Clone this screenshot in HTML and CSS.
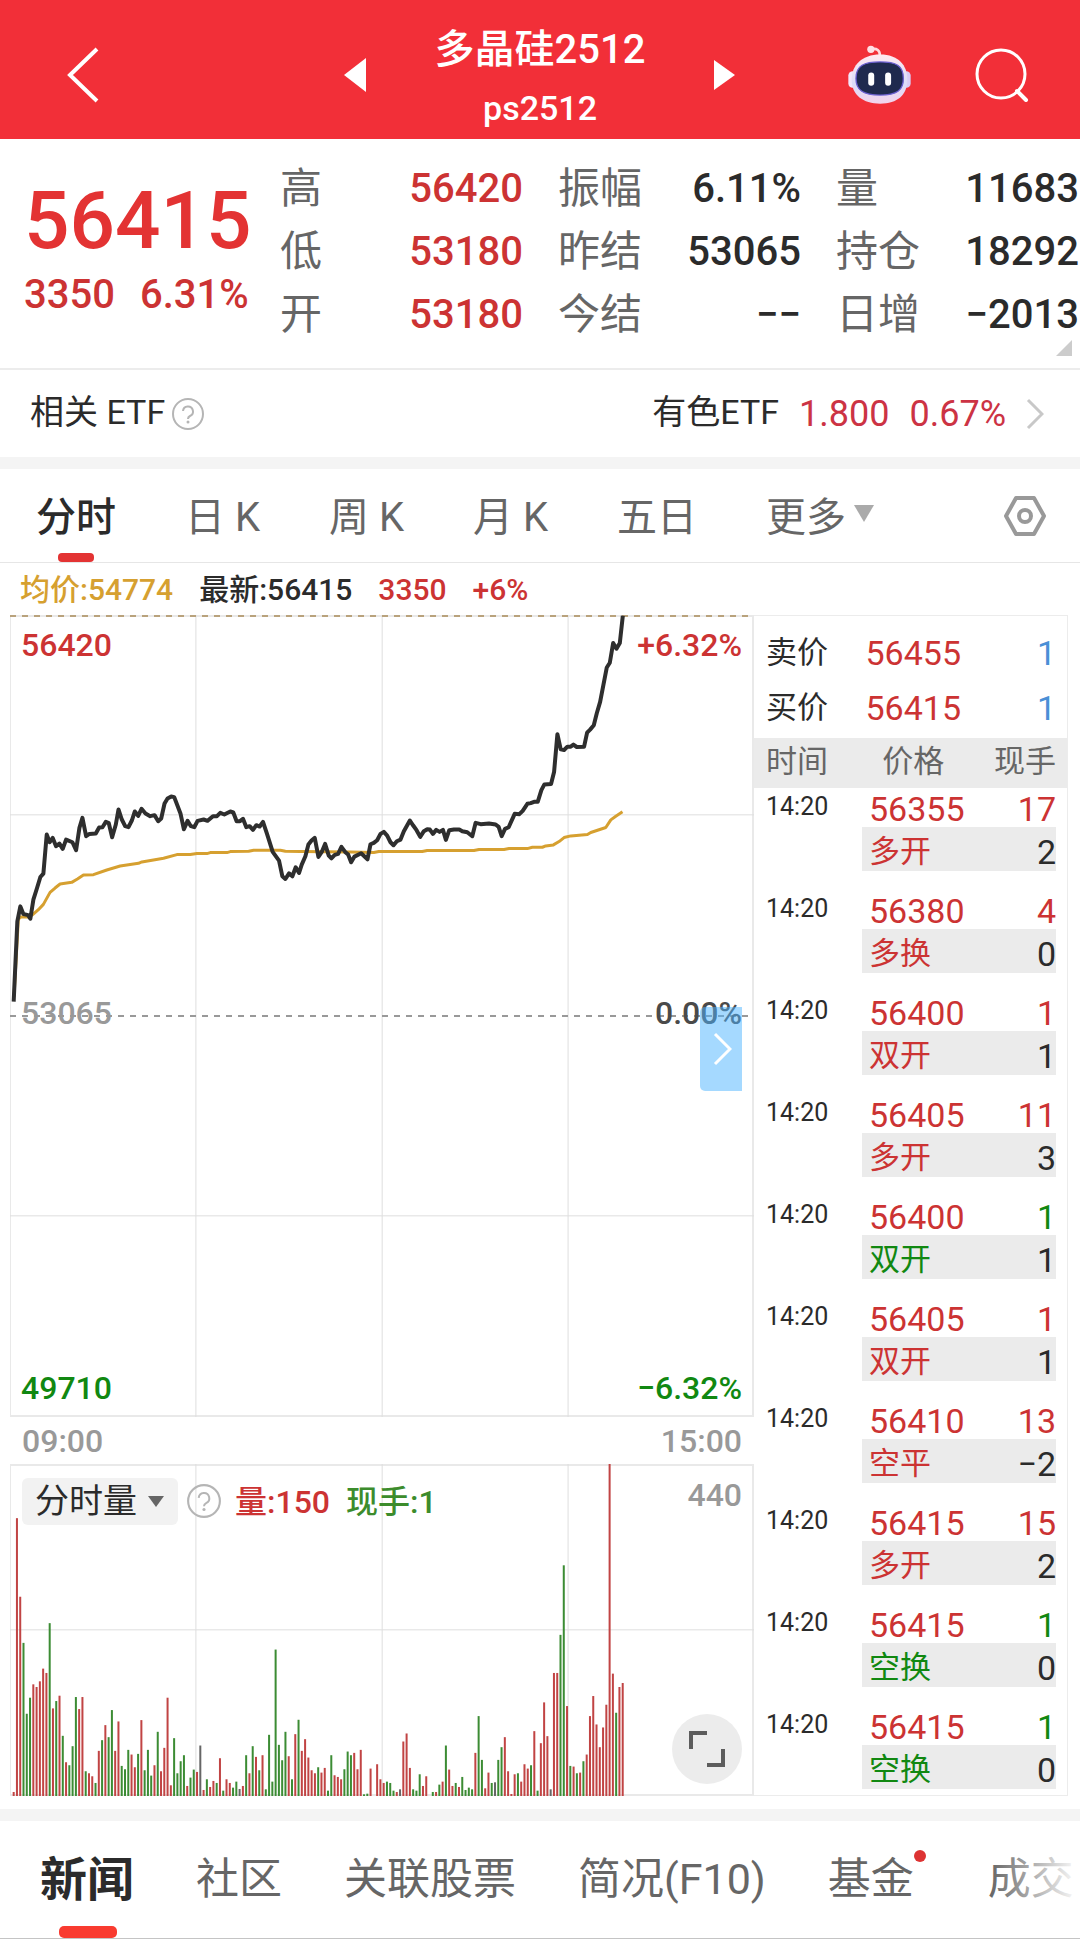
FILE: index.html
```html
<!DOCTYPE html>
<html lang="zh-CN">
<head>
    <meta charset="UTF-8">
    <meta name="viewport" content="width=device-width, initial-scale=1.0">
    <title>多晶硅2512</title>
    <link rel="stylesheet" href="styles.css">
</head>
<body>
<header class="topbar">
    <button class="back" aria-label="返回">
        <svg width="34" height="56" viewBox="0 0 34 56"><path d="M31 2 L4 28 L31 54" fill="none" stroke="#fff" stroke-width="4"/></svg>
    </button>
    <div class="switcher">
        <button aria-label="上一个"><svg width="24" height="34" viewBox="0 0 24 34"><path d="M22 0 V34 L0 17 Z" fill="#fff"/></svg></button>
        <h1>多晶硅2512<small>ps2512</small></h1>
        <button aria-label="下一个"><svg width="24" height="34" viewBox="0 0 24 34"><path d="M2 2 V32 L23 17 Z" fill="#fff"/></svg></button>
    </div>
    <div class="tools">
        <button aria-label="智能助手">
            <svg width="65" height="61" viewBox="80 68 196 184">
                <defs>
                    <linearGradient id="shell" x1="0" y1="0" x2="0" y2="1">
                        <stop offset="0" stop-color="#ffe9f0"/>
                        <stop offset="0.6" stop-color="#dcdcf8"/>
                        <stop offset="1" stop-color="#f3d3ec"/>
                    </linearGradient>
                </defs>
                <path d="M152 84 Q180 78 179 104" fill="none" stroke="#ffd9de" stroke-width="8"/>
                <circle cx="152" cy="84" r="11" fill="#ffdfe4"/>
                <rect x="84" y="150" width="26" height="50" rx="13" fill="#f3e6fa"/>
                <rect x="246" y="150" width="26" height="50" rx="13" fill="#d9cdf6"/>
                <path d="M180 100 C235 100 262 132 262 176 C262 222 232 248 180 248 C128 248 94 222 94 176 C94 132 125 100 180 100 Z" fill="url(#shell)"/>
                <path d="M180 122 C228 122 250 132 250 172 C250 208 230 222 180 222 C130 222 107 208 107 172 C107 132 132 122 180 122 Z" fill="#1f2a4e" stroke="#6a5fd0" stroke-width="4"/>
                <rect x="144" y="154" width="18" height="40" rx="9" fill="#fff"/>
                <rect x="195" y="154" width="18" height="40" rx="9" fill="#fff"/>
            </svg>
        </button>
        <button aria-label="搜索">
            <svg width="54" height="54" viewBox="0 0 54 54"><circle cx="26" cy="26" r="24" fill="none" stroke="#fff" stroke-width="3"/><path d="M42 43 L51 52" stroke="#fff" stroke-width="4" stroke-linecap="round"/></svg>
        </button>
    </div>
</header>

<section class="quote">
    <div class="last">
        <strong>56415</strong>
        <p><span>3350</span><span>6.31%</span></p>
    </div>
    <dl class="up">
        <dt>高</dt><dd>56420</dd>
        <dt>低</dt><dd>53180</dd>
        <dt>开</dt><dd>53180</dd>
    </dl>
    <dl>
        <dt>振幅</dt><dd>6.11%</dd>
        <dt>昨结</dt><dd>53065</dd>
        <dt>今结</dt><dd>−−</dd>
    </dl>
    <dl>
        <dt>量</dt><dd>11683</dd>
        <dt>持仓</dt><dd>18292</dd>
        <dt>日增</dt><dd>−2013</dd>
    </dl>
    <i class="corner"></i>
</section>

<section class="etf">
    <span>相关 ETF</span>
    <button class="help" aria-label="说明">
        <svg width="34" height="34" viewBox="0 0 34 34"><circle cx="17" cy="17" r="15" fill="none" stroke="#b5b5b5" stroke-width="2"/><path d="M12 14 a5 5 0 1 1 7 5 q-2 1 -2 3" fill="none" stroke="#b5b5b5" stroke-width="2"/><circle cx="17" cy="25" r="1.5" fill="#b5b5b5"/></svg>
    </button>
    <a class="etf-link" href="#etf">
        <span>有色ETF</span><b>1.800</b><b>0.67%</b>
        <svg width="18" height="32" viewBox="0 0 18 32"><path d="M2 2 L16 16 L2 30" fill="none" stroke="#c8c8c8" stroke-width="3"/></svg>
    </a>
</section>

<nav class="periods">
    <button class="active">分时</button>
    <button>日 K</button>
    <button>周 K</button>
    <button>月 K</button>
    <button>五日</button>
    <button>更多<svg width="20" height="17" viewBox="0 0 20 17"><path d="M0 0 H20 L10 17 Z" fill="#aaa"/></svg></button>
    <button class="settings" aria-label="设置">
        <svg width="42" height="42" viewBox="0 0 42 42"><path d="M12 3 H30 L40 21 L30 39 H12 L2 21 Z" fill="none" stroke="#999" stroke-width="4" stroke-linejoin="round"/><circle cx="21" cy="21" r="6" fill="none" stroke="#999" stroke-width="4"/></svg>
    </button>
</nav>

<p class="legend">
    <span class="avg">均价:54774</span>
    <span>最新:56415</span>
    <span class="up">3350</span>
    <span class="up">+6%</span>
</p>

<main class="board">
    <div class="charts">
        <div class="price-chart">
            <svg viewBox="30 48 2229 2400" preserveAspectRatio="none">
                <path class="grid" d="M587 48 V2448 M1145 48 V2448 M1702 48 V2448 M30 646 H2259 M30 1846 H2259"/>
                <path class="limit" d="M30 51 H2259"/>
                <path class="zero" d="M30 1248 H2259"/>
                <polyline class="avg-line" points="42,1190 55,958 62,952 85,952 98,945 115,930 130,914 150,878 165,865 180,853 215,848 232,838 250,826 280,825 320,811 360,799 415,791 425,787 490,776 530,765 570,765 590,762 620,762 630,759 680,759 690,756 745,755 760,752 840,752 855,755 900,756 1050,757 1120,759 1135,756 1265,756 1280,753 1420,753 1435,750 1510,750 1525,747 1580,747 1595,743 1625,743 1635,739 1658,736 1675,726 1690,714 1710,709 1760,705 1770,699 1815,684 1830,661 1845,650 1865,637"/>
                <polyline class="price-line" points="41,1205 52,965 61,920 70,943 84,946 91,957 100,900 111,865 121,832 130,822 140,705 149,728 158,715 168,740 178,732 188,748 198,720 217,728 228,752 238,685 247,655 258,710 268,703 287,702 297,684 307,683 317,667 326,671 336,713 347,675 355,630 365,660 375,680 385,683 395,663 404,636 414,649 424,628 436,642 450,650 463,647 474,665 483,657 493,612 502,597 513,591 522,593 541,643 551,689 562,664 572,680 582,683 592,664 610,660 622,664 638,650 650,650 660,640 672,645 690,636 699,639 709,665 719,665 728,658 738,683 748,680 758,691 768,677 778,681 788,667 800,703 817,757 836,783 846,830 855,838 866,821 876,830 886,803 896,820 904,795 915,770 924,735 934,722 943,715 954,772 964,757 974,733 985,768 993,776 1003,766 1013,763 1023,742 1034,757 1043,765 1052,788 1062,771 1082,761 1101,779 1110,734 1120,730 1130,722 1140,703 1150,697 1160,708 1170,728 1179,737 1189,725 1200,720 1210,695 1228,663 1238,678 1248,692 1259,712 1270,695 1280,689 1288,690 1297,703 1307,691 1317,697 1327,691 1336,721 1346,692 1360,690 1376,690 1385,695 1400,698 1415,710 1425,670 1440,674 1465,672 1485,675 1494,682 1503,710 1513,688 1524,683 1542,643 1556,644 1566,634 1580,613 1590,611 1600,607 1611,607 1622,572 1631,555 1651,554 1660,518 1670,405 1680,450 1690,452 1700,442 1710,442 1718,436 1728,443 1750,442 1759,400 1768,391 1779,378 1788,342 1798,308 1818,205 1827,191 1837,132 1847,149 1857,132 1866,50"/>
            </svg>
            <span class="label top-left up">56420</span>
            <span class="label top-right up">+6.32%</span>
            <span class="label mid-left">53065</span>
            <span class="label mid-right">0.00%</span>
            <span class="label bottom-left down">49710</span>
            <span class="label bottom-right down">−6.32%</span>
            <button class="fold" aria-label="收起盘口">
                <svg width="20" height="34" viewBox="0 0 20 34"><path d="M3 2 L18 17 L3 32" fill="none" stroke="#fff" stroke-width="3"/></svg>
            </button>
        </div>
        <div class="times"><span>09:00</span><span>15:00</span></div>
        <div class="volume-chart">
            <svg id="volume" viewBox="30 309 2229 993" preserveAspectRatio="none">
                <path class="grid" d="M587 309 V1302 M1145 309 V1302 M1702 309 V1302 M30 805 H2259"/>
            </svg>
            <div class="volume-head">
                <span class="picker">
                    <select aria-label="指标"><option>分时量</option></select>
                    <svg width="16" height="11" viewBox="0 0 16 11"><path d="M0 0 H16 L8 11 Z" fill="#666"/></svg>
                </span>
                <button class="help" aria-label="说明">
                    <svg width="36" height="36" viewBox="0 0 34 34"><circle cx="17" cy="17" r="15" fill="none" stroke="#b5b5b5" stroke-width="2"/><path d="M12 14 a5 5 0 1 1 7 5 q-2 1 -2 3" fill="none" stroke="#b5b5b5" stroke-width="2"/><circle cx="17" cy="25" r="1.5" fill="#b5b5b5"/></svg>
                </button>
                <span class="up">量:150</span>
                <span class="now">现手:1</span>
                <span class="max">440</span>
            </div>
            <button class="fullscreen" aria-label="全屏">
                <svg width="36" height="36" viewBox="0 0 36 36"><path d="M2 18 V2 H18 M34 18 V34 H18" fill="none" stroke="#5c5c5c" stroke-width="4"/></svg>
            </button>
        </div>
    </div>

    <aside class="ticks">
        <table class="bidask">
            <tr><th>卖价</th><td class="up">56455</td><td class="size">1</td></tr>
            <tr><th>买价</th><td class="up">56415</td><td class="size">1</td></tr>
        </table>
        <table class="trades">
            <thead>
                <tr><th>时间</th><th>价格</th><th>现手</th></tr>
            </thead>
            <tbody>
                <tr><td rowspan="2">14:20</td><td class="up">56355</td><td class="up">17</td></tr>
                <tr class="kind"><td class="up">多开</td><td>2</td></tr>
            </tbody>
            <tbody>
                <tr><td rowspan="2">14:20</td><td class="up">56380</td><td class="up">4</td></tr>
                <tr class="kind"><td class="up">多换</td><td>0</td></tr>
            </tbody>
            <tbody>
                <tr><td rowspan="2">14:20</td><td class="up">56400</td><td class="up">1</td></tr>
                <tr class="kind"><td class="up">双开</td><td>1</td></tr>
            </tbody>
            <tbody>
                <tr><td rowspan="2">14:20</td><td class="up">56405</td><td class="up">11</td></tr>
                <tr class="kind"><td class="up">多开</td><td>3</td></tr>
            </tbody>
            <tbody>
                <tr><td rowspan="2">14:20</td><td class="up">56400</td><td class="down">1</td></tr>
                <tr class="kind"><td class="down">双开</td><td>1</td></tr>
            </tbody>
            <tbody>
                <tr><td rowspan="2">14:20</td><td class="up">56405</td><td class="up">1</td></tr>
                <tr class="kind"><td class="up">双开</td><td>1</td></tr>
            </tbody>
            <tbody>
                <tr><td rowspan="2">14:20</td><td class="up">56410</td><td class="up">13</td></tr>
                <tr class="kind"><td class="up">空平</td><td>−2</td></tr>
            </tbody>
            <tbody>
                <tr><td rowspan="2">14:20</td><td class="up">56415</td><td class="up">15</td></tr>
                <tr class="kind"><td class="up">多开</td><td>2</td></tr>
            </tbody>
            <tbody>
                <tr><td rowspan="2">14:20</td><td class="up">56415</td><td class="down">1</td></tr>
                <tr class="kind"><td class="down">空换</td><td>0</td></tr>
            </tbody>
            <tbody>
                <tr><td rowspan="2">14:20</td><td class="up">56415</td><td class="down">1</td></tr>
                <tr class="kind"><td class="down">空换</td><td>0</td></tr>
            </tbody>
        </table>
    </aside>
</main>

<nav class="sections">
    <a class="active" href="#news">新闻</a>
    <a href="#community">社区</a>
    <a href="#stocks">关联股票</a>
    <a href="#profile">简况(F10)</a>
    <a class="dot" href="#fund">基金</a>
    <a href="#deals">成交</a>
</nav>
<script src="chart.js"></script>
</body>
</html>
```
FILE: styles.css
```css
* {
    box-sizing: border-box;
}

body {
    margin: 0;
    font-family: Roboto, "Noto Sans CJK SC", sans-serif;
    background-color: #fff;
    color: #2b2b2b;
    overflow-x: hidden;
}

button {
    font: inherit;
    color: inherit;
    background: none;
    border: none;
    padding: 0;
    cursor: pointer;
}

a {
    color: inherit;
    text-decoration: none;
}

svg {
    display: block;
}

dl, dd, p, h1 {
    margin: 0;
}

.up {
    color: #cc3333;
}

.down {
    color: #118811;
}

/* top bar */
.topbar {
    display: grid;
    grid-template-columns: 1fr 392px 1fr;
    align-items: center;
    height: 139px;
    padding-top: 10px;
    background-color: #f22f38;
    color: #fff;
}

.back {
    justify-self: start;
    margin-left: 66px;
}

.switcher {
    display: flex;
    justify-content: space-between;
    align-items: center;
}

.switcher h1 {
    padding-top: 6px;
    font-size: 40px;
    line-height: 60px;
    font-weight: 500;
    text-align: center;
}

.switcher small {
    display: block;
    font-size: 34px;
    line-height: 56px;
}

.tools {
    display: flex;
    justify-content: flex-end;
    align-items: center;
    gap: 63px;
    padding-right: 51px;
}

/* quote */
.quote {
    position: relative;
    display: grid;
    grid-template-columns: 245px repeat(3, 243px);
    column-gap: 35px;
    height: 231px;
    padding-top: 18px;
    border-bottom: 2px solid #ececec;
}

.last {
    padding-left: 24px;
    padding-top: 20px;
    white-space: nowrap;
    color: #cc3333;
    font-weight: 500;
}

.last strong {
    display: block;
    font-size: 80px;
    line-height: 88px;
    font-weight: 500;
    color: #e33333;
}

.last p {
    display: flex;
    gap: 25px;
    font-size: 40px;
    line-height: 60px;
}

.quote dl {
    display: grid;
    grid-template-columns: auto 1fr;
    grid-auto-rows: 63px;
    line-height: 63px;
}

.quote dt {
    font-size: 42px;
    color: #666;
}

.quote dd {
    font-size: 40px;
    font-weight: 500;
    text-align: right;
}

.corner {
    position: absolute;
    right: 8px;
    bottom: 12px;
    border-left: 16px solid transparent;
    border-bottom: 16px solid #ccc;
}

/* etf */
.etf {
    display: flex;
    align-items: center;
    gap: 6px;
    height: 87px;
    padding: 0 36px 0 30px;
    font-size: 34px;
    line-height: 44px;
}

.etf span {
    padding-bottom: 3px;
}

.etf-link {
    display: flex;
    align-items: center;
    gap: 20px;
    margin-left: auto;
}

.etf-link b {
    font-size: 36px;
    font-weight: 400;
    color: #cc3344;
}

/* period tabs */
.periods {
    display: flex;
    align-items: center;
    gap: 69px;
    height: 106px;
    padding: 0 34px 0 36px;
    border-top: 12px solid #f4f4f4;
    border-bottom: 1px solid #e6e6e6;
    font-size: 40px;
    color: #666;
    white-space: nowrap;
}

.periods button {
    position: relative;
    display: flex;
    align-items: center;
    gap: 8px;
    height: 93px;
    padding-bottom: 4px;
}

.periods .active {
    color: #2b2b2b;
    font-weight: 500;
}

.periods .active::after {
    content: '';
    position: absolute;
    left: 22px;
    bottom: 0;
    width: 36px;
    height: 9px;
    border-radius: 4px;
    background-color: #e33333;
}

.periods .settings {
    margin-left: auto;
    padding: 0;
}

.legend {
    display: flex;
    gap: 26px;
    padding: 2px 0 0 20px;
    font-size: 30px;
    line-height: 50px;
    font-weight: 500;
}

.avg {
    color: #d6a030;
}

/* charts */
.board {
    display: grid;
    grid-template-columns: 1fr 314px;
    padding: 0 12px 13px 10px;
}

.charts {
    display: flex;
    flex-direction: column;
    font-size: 32px;
    font-weight: 500;
}

.price-chart,
.volume-chart {
    position: relative;
    border: solid #e9e9e9;
    border-width: 2px 2px 2px 1px;
}

.price-chart {
    height: 802px;
}

.volume-chart {
    flex: 1;
}

.charts > div > svg {
    position: absolute;
    top: -2px;
    left: -1px;
    width: calc(100% + 3px);
    height: calc(100% + 4px);
}

.charts path,
.charts polyline {
    vector-effect: non-scaling-stroke;
}

.grid {
    fill: none;
    stroke: #dedede;
    stroke-width: 1;
}

.limit,
.zero {
    fill: none;
    stroke: #b9a27c;
    stroke-width: 2;
    stroke-dasharray: 6 6;
}

.zero {
    stroke: #999;
}

.avg-line,
.price-line {
    fill: none;
    stroke: #d6a030;
    stroke-width: 3;
    stroke-linejoin: round;
}

.price-line {
    stroke: #2e2e2e;
    stroke-width: 4;
}

.label {
    position: absolute;
    line-height: 38px;
}

.top-left, .mid-left, .bottom-left {
    left: 10px;
}

.top-right, .mid-right, .bottom-right {
    right: 10px;
}

.top-left, .top-right {
    top: 9px;
}

.mid-left, .mid-right {
    top: 377px;
}

.bottom-left, .bottom-right {
    bottom: 8px;
}

.mid-left {
    color: #999;
}

.mid-right {
    color: #4a4a4a;
}

.fold {
    position: absolute;
    top: 390px;
    right: 10px;
    width: 42px;
    height: 84px;
    padding-left: 12px;
    border-radius: 5px 0 0 5px;
    background-color: rgba(76, 180, 255, 0.5);
}

.times {
    display: flex;
    justify-content: space-between;
    padding: 1px 12px 0;
    line-height: 46px;
    color: #999;
}

.volume-head {
    position: relative;
    display: flex;
    align-items: center;
    gap: 16px;
    padding: 10px 10px 0 11px;
}

.volume-head .help {
    margin: 0 -3px 0 -8px;
}

.volume-head > span {
    padding-bottom: 4px;
}

.volume-head .picker {
    position: relative;
    padding: 0;
}

.picker select {
    appearance: none;
    width: 156px;
    height: 47px;
    padding: 0 0 0 13px;
    border: none;
    border-radius: 6px;
    background-color: #f2f2f2;
    color: #2b2b2b;
    font-family: inherit;
    font-size: 34px;
}

.picker svg {
    position: absolute;
    right: 14px;
    top: 18px;
    pointer-events: none;
}

.now {
    color: #3c8c2c;
}

.volume-head .max {
    margin-left: auto;
    color: #999;
    align-self: flex-start;
}

.fullscreen {
    position: absolute;
    right: 10px;
    bottom: 10px;
    width: 70px;
    height: 70px;
    padding: 17px;
    border-radius: 50%;
    background-color: #ececec;
}

/* order book and trades */
.ticks {
    padding-bottom: 6px;
    border: 1px solid #ececec;
    border-left: none;
    font-size: 34px;
}

.ticks table {
    width: 100%;
    table-layout: fixed;
    border-collapse: separate;
    border-spacing: 0;
}

.ticks td,
.ticks th {
    padding: 0 11px 0 12px;
    font-weight: 400;
}

.ticks th {
    padding-bottom: 4px;
    font-size: 31px;
    line-height: 45px;
    text-align: left;
}

.ticks tr > :first-child {
    width: 108px;
}

.bidask {
    margin: 11px 0 1px;
}

.bidask tr {
    height: 55px;
}

.bidask td {
    padding: 0 0 4px;
    text-align: center;
}

.bidask td.size {
    padding-right: 11px;
    text-align: right;
    color: #4a8fd6;
}

.trades thead tr {
    height: 50px;
    background-color: #ebebeb;
    color: #666;
}

.trades thead th:nth-child(2) {
    padding-left: 0;
    padding-right: 0;
    text-align: center;
}

.trades thead th:last-child {
    text-align: right;
}

.trades td {
    line-height: 35px;
    vertical-align: bottom;
}

.trades td[rowspan] {
    font-size: 25px;
    line-height: 37px;
    vertical-align: top;
}

.trades tbody tr:first-child {
    height: 39px;
}

.trades tbody + tbody tr:first-child {
    height: 58px;
}

.trades tbody + tbody td[rowspan] {
    padding-top: 19px;
}

.trades tbody td:nth-last-child(2) {
    padding: 0 0 0 7px;
}

.trades tbody td:last-child {
    text-align: right;
}

.trades .kind {
    height: 44px;
}

.trades .kind td {
    font-size: 31px;
    line-height: 38px;
    background: #ebebeb;
}

.trades .kind td:last-child {
    font-size: 34px;
    border-right: 11px solid #fff;
    padding-right: 0;
}

/* bottom tabs */
.sections {
    position: relative;
    display: flex;
    align-items: center;
    gap: 62px;
    height: 130px;
    padding-left: 40px;
    border-top: 12px solid #f4f4f4;
    border-bottom: 1px solid #c4c4c4;
    font-size: 43px;
    color: #666;
    white-space: nowrap;
    overflow: hidden;
}

.sections::after {
    content: '';
    position: absolute;
    top: 0;
    right: 0;
    bottom: 0;
    width: 90px;
    background: linear-gradient(to right, rgba(255, 255, 255, 0), #fff);
}

.sections a {
    position: relative;
    line-height: 117px;
}

.sections .active {
    font-size: 47px;
    font-weight: 700;
    color: #2b2b2b;
}

.sections .active::after {
    content: '';
    position: absolute;
    left: 19px;
    bottom: 0;
    width: 58px;
    height: 12px;
    border-radius: 5px;
    background-color: #f93b30;
}

.sections .dot {
    padding-right: 12px;
}

.sections .dot::after {
    content: '';
    position: absolute;
    top: 29px;
    right: 0;
    width: 12px;
    height: 12px;
    border-radius: 50%;
    background-color: #dd3333;
}
```
FILE: chart.js
```js
// one bar per minute: colour (r/g/k) and top edge, '-' for a minute without trades
const bars = `r1290 r471 r706 g844 g1056 g1008 r968 r976 r959 r921 r934 g785 r1040 g1018 r1002 g1122 r1201 g1210 g1153 g1006
r1042 r1006 g1228 r1234 r1243 g1263 r1167 g1135 r1090 g1126 g1045 r1167 r1079 g1212 g1222 g1164 r1178 r1216 g1176 r1075
g1225 g1164 g1241 r1210 g1110 r1228 r1158 r1008 r1270 g1129 g1234 g1198 g1180 r1272 g1247 g1223 r1230 k1151 r1284 g1252
r1275 r1257 g1263 r1189 g1286 r1252 r1263 g1277 g1259 k1281 r1272 g1180 r1234 g1153 r1185 g1225 r1180 g1282 g1119 g1259
g864 g1149 g1195 g1110 r1183 g1252 r1117 g1074 r1167 r1132 r1187 r1225 r1234 g1216 r1232 r1218 g1286 g1180 r1240 r1245
r1252 g1222 g1169 g1180 r1173 r1222 r1164 g1297 g1295 r1220 - r1207 r1252 r1263 g1259 g1263 g1286 r1290 k1282 r1139
r1115 r1218 g1282 g1286 g1237 r1272 r1243 - g1290 r1290 g1268 r1259 g1151 r1223 r1272 g1263 r1275 g1245 g1284 g1277
g1282 r1173 g1063 g1194 r1279 r1232 g1263 k1261 g1194 g1156 r1126 r1228 r1296 r1237 g1234 r1259 r1207 r1220 g1210 r1108
g1286 r1144 r1022 r1123 k1282 r934 r934 g820 g612 r1033 g1212 r1214 g1234 r1232 g1198 r1178 r1063 r1003 r1088 r1156
r1097 r1029 r309 r936 g1053 r976 r964`.split(/\s+/);

const colors = { r: '#c14444', g: '#3c8c34', k: '#666' };
const base = 1302;
const svg = document.getElementById('volume');

bars.forEach((bar, i) => {
    if (bar === '-') return;
    const top = Number(bar.slice(1));
    const rect = document.createElementNS('http://www.w3.org/2000/svg', 'rect');
    rect.setAttribute('x', 38 + i * 9.81);
    rect.setAttribute('y', top);
    rect.setAttribute('width', 6);
    rect.setAttribute('height', base - top);
    rect.setAttribute('fill', colors[bar[0]]);
    svg.appendChild(rect);
});
```
